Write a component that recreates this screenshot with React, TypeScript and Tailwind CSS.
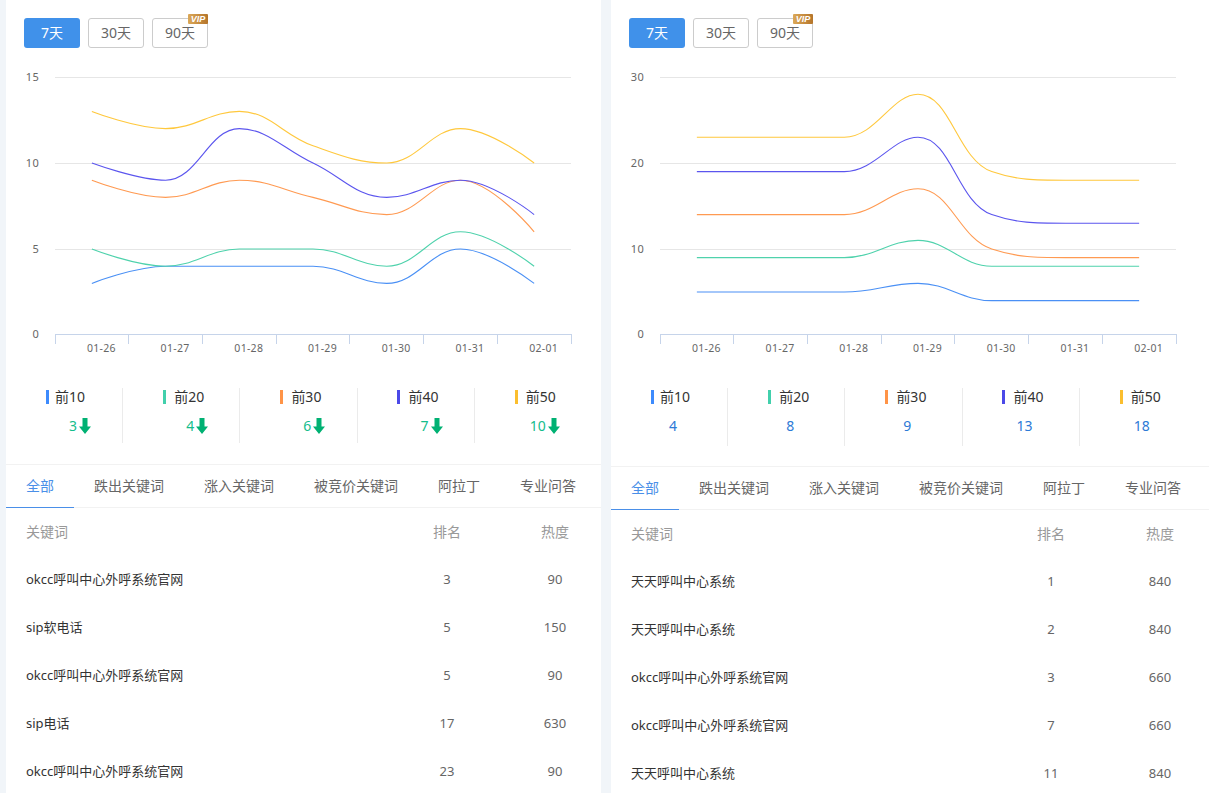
import React from "react";

const FONT = "font-['Noto_Sans','Noto_Sans_CJK_SC',sans-serif]";
const COLORS = ["#4a90f5", "#4fd2ac", "#ff9a52", "#5b55ee", "#ffc83d"];
const MARKS = ["bg-[#3d8bfd]", "bg-[#42d0ac]", "bg-[#ff9447]", "bg-[#4b49e8]", "bg-[#fbbe2e]"];
const LABELS = ["前10", "前20", "前30", "前40", "前50"];
const TABS = ["全部", "跌出关键词", "涨入关键词", "被竞价关键词", "阿拉丁", "专业问答"];
const DATES = ["01-26", "01-27", "01-28", "01-29", "01-30", "01-31", "02-01"];

const clamp = (v: number, a: number, b: number) => Math.max(Math.min(v, Math.max(a, b)), Math.min(a, b));

function smoothPath(pts: [number, number][]) {
  const s = 0.4;
  let d = `M${pts[0][0]} ${pts[0][1]}`;
  let c0 = pts[0];
  for (let i = 1; i < pts.length; i++) {
    const [x, y] = pts[i];
    const [px, py] = pts[i - 1];
    if (i === pts.length - 1) {
      d += ` C${c0[0]} ${c0[1]} ${x} ${y} ${x} ${y}`;
      break;
    }
    const [nx, ny] = pts[i + 1];
    const l0 = Math.hypot(x - px, y - py);
    const l1 = Math.hypot(nx - x, ny - y);
    const r = l1 / (l0 + l1);
    let ncx = clamp(x + (nx - px) * s * r, nx, x);
    let ncy = clamp(y + (ny - py) * s * r, ny, y);
    let cx = clamp(x - ((ncx - x) * l0) / l1, px, x);
    let cy = clamp(y - ((ncy - y) * l0) / l1, py, y);
    ncx = x + ((x - cx) * l1) / l0;
    ncy = y + ((y - cy) * l1) / l0;
    d += ` C${c0[0]} ${c0[1]} ${cx} ${cy} ${x} ${y}`;
    c0 = [ncx, ncy];
  }
  return d;
}

function Chart({ max, series }: { max: number; series: number[][] }) {
  const x0 = 49;
  const band = 516 / 7;
  const yAt = (v: number) => 275 - (v / max) * 258;
  const ticks = [0, max / 3, (max * 2) / 3, max];
  return (
    <svg width="595" height="300" className="block">
      {ticks.slice(1).map((t) => (
        <line key={t} x1={x0} x2={x0 + 516} y1={yAt(t) + 0.5} y2={yAt(t) + 0.5} stroke="#e6e6e6" />
      ))}
      {ticks.map((t) => (
        <text key={t} x={33.5} y={yAt(t) + (t === 0 ? 2.5 : 3.5)} textAnchor="end" fontSize="11" letterSpacing="0.6" fill="#666" fontFamily="Noto Sans">
          {t}
        </text>
      ))}
      <line x1={x0} x2={x0 + 516} y1={274.5} y2={274.5} stroke="#c6d4ea" />
      {Array.from({ length: 8 }, (_, i) => (
        <line key={i} x1={Math.floor(x0 + band * i) + 0.5} x2={Math.floor(x0 + band * i) + 0.5} y1={274} y2={284} stroke="#c6d4ea" />
      ))}
      {DATES.map((d, i) => (
        <text key={d} x={x0 + band * (i + 0.5) + 9.5} y={292} textAnchor="middle" fontSize="10.5" letterSpacing="0.3" fill="#666" fontFamily="Noto Sans">
          {d}
        </text>
      ))}
      {series.map((vals, i) => (
        <path
          key={i}
          d={smoothPath(vals.map((v, k) => [x0 + band * (k + 0.5), yAt(v)] as [number, number]))}
          fill="none"
          stroke={COLORS[i]}
          strokeWidth="1.1"
        />
      ))}
    </svg>
  );
}

function Arrow() {
  return (
    <svg width="12" height="16" viewBox="0 0 12 16" className="block">
      <path d="M3.5 0h5v8.5H12L6 16 0 8.5h3.5z" fill="#00b173" />
    </svg>
  );
}

function Ranges() {
  const base = "h-[30px] w-14 rounded-[3px] text-sm flex items-center justify-center";
  const off = `${base} border border-[#ccc] text-[#666]`;
  return (
    <div className="flex gap-2 pl-[18px] pt-[18px] h-[60px]">
      <div className={`${base} bg-[#4091ea] text-white`}>7天</div>
      <div className={off}>30天</div>
      <div className={`${off} relative`}>
        90天
        <span className="absolute right-[-1px] top-[-5px] h-[10px] w-5 rounded-[1px] bg-gradient-to-r from-[#dba858] to-[#b5752a] text-white text-[9px] leading-[10px] font-bold italic text-center font-['Liberation_Sans',sans-serif]">
          VIP
        </span>
      </div>
    </div>
  );
}

function Stats({ values, down, h }: { values: number[]; down: boolean; h: string }) {
  return (
    <div className={`flex mt-[28px] ${h}`}>
      {values.map((v, i) => (
        <div key={i} className={`w-[117.2px] shrink-0 ${i < 4 ? "border-r border-[#ebebeb]" : ""}`}>
          <div className="flex items-center h-[18px] pl-10 text-sm text-[#333] leading-[18px]">
            <span className={`w-[3px] h-[14px] ${MARKS[i]} mr-[6px] ${i === 3 ? "-ml-px" : ""}`} />
            <span className={i === 0 ? "" : i === 3 ? "ml-[3px]" : "ml-[2px]"}>{LABELS[i]}</span>
          </div>
          {down ? (
            <div className="flex justify-end items-center gap-[2px] w-[85px] mt-[11px] h-[18px] text-sm text-[#14bd8c]">
              {v}
              <Arrow />
            </div>
          ) : (
            <div className="w-[124px] text-center mt-[11px] h-[18px] leading-[18px] text-sm text-[#2d7ad6]">{v}</div>
          )}
        </div>
      ))}
    </div>
  );
}

function Tabs() {
  return (
    <div className="flex h-[44px] border-y border-[#f2f2f2]">
      {TABS.map((t, i) => (
        <div
          key={t}
          className={`px-5 h-[43px] leading-[42px] text-sm ${i === 0 ? "text-[#4a8fe8] border-b border-[#4a8fe8]" : "text-[#666]"}`}
        >
          {t}
        </div>
      ))}
    </div>
  );
}

function Table({ rows, c2, c3 }: { rows: [string, number, number][]; c2: string; c3: string }) {
  return (
    <div className="text-[13px]">
      <div className="flex h-12 items-center pl-5 text-[#999] text-sm">
        <div className="flex-1">关键词</div>
        <div className={`${c2} text-center`}>排名</div>
        <div className={`${c3} text-center`}>热度</div>
      </div>
      {rows.map(([k, a, b], i) => (
        <div key={i} className="flex h-12 items-center pl-5">
          <div className="flex-1 text-[#333]">{k}</div>
          <div className={`${c2} text-center text-[#666]`}>{a}</div>
          <div className={`${c3} text-center text-[#666]`}>{b}</div>
        </div>
      ))}
    </div>
  );
}

const A = "okcc呼叫中心外呼系统官网";
const T = "天天呼叫中心系统";

export default function App() {
  return (
    <div className={`flex h-[793px] overflow-hidden bg-[#f1f5f9] pl-[6px] gap-[10px] ${FONT}`}>
      <div className="w-[595px] bg-white">
        <Ranges />
        <Chart
          max={15}
          series={[
            [3, 4, 4, 4, 3, 5, 3],
            [5, 4, 5, 5, 4, 6, 4],
            [9, 8, 9, 8, 7, 9, 6],
            [10, 9, 12, 10, 8, 9, 7],
            [13, 12, 13, 11, 10, 12, 10],
          ]}
        />
        <Stats values={[3, 4, 6, 7, 10]} down h="h-[55px] mb-[21px]" />
        <Tabs />
        <Table
          c2="w-[124px]"
          c3="w-[92px]"
          rows={[
            [A, 3, 90],
            ["sip软电话", 5, 150],
            [A, 5, 90],
            ["sip电话", 17, 630],
            [A, 23, 90],
          ]}
        />
      </div>
      <div className="w-[598px] bg-white">
        <Ranges />
        <Chart
          max={30}
          series={[
            [5, 5, 5, 6, 4, 4, 4],
            [9, 9, 9, 11, 8, 8, 8],
            [14, 14, 14, 17, 10, 9, 9],
            [19, 19, 19, 23, 14, 13, 13],
            [23, 23, 23, 28, 19, 18, 18],
          ]}
        />
        <Stats values={[4, 8, 9, 13, 18]} down={false} h="h-[58px] mb-[20px]" />
        <Tabs />
        <Table
          c2="w-[120px]"
          c3="w-[98px]"
          rows={[
            [T, 1, 840],
            [T, 2, 840],
            [A, 3, 660],
            [A, 7, 660],
            [T, 11, 840],
          ]}
        />
      </div>
    </div>
  );
}
